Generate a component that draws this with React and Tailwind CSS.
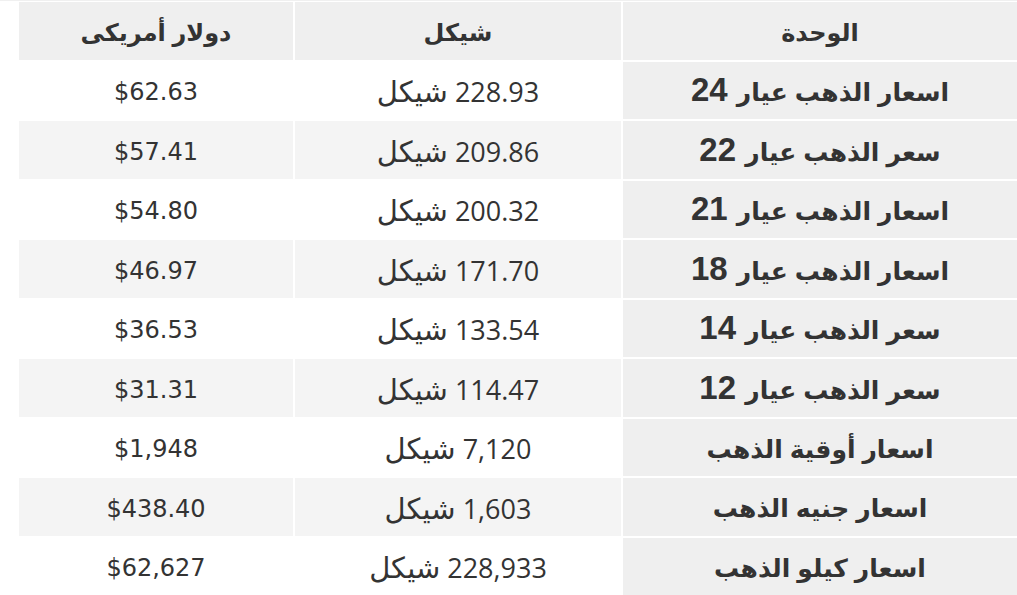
import React from "react";

const rows = [
  { unit: "اسعار الذهب عيار", k: "24", ils: "228.93", usd: "$62.63" },
  { unit: "سعر الذهب عيار", k: "22", ils: "209.86", usd: "$57.41" },
  { unit: "اسعار الذهب عيار", k: "21", ils: "200.32", usd: "$54.80" },
  { unit: "اسعار الذهب عيار", k: "18", ils: "171.70", usd: "$46.97" },
  { unit: "سعر الذهب عيار", k: "14", ils: "133.54", usd: "$36.53" },
  { unit: "سعر الذهب عيار", k: "12", ils: "114.47", usd: "$31.31" },
  { unit: "اسعار أوقية الذهب", ils: "7,120", usd: "$1,948" },
  { unit: "اسعار جنيه الذهب", ils: "1,603", usd: "$438.40" },
  { unit: "اسعار كيلو الذهب", ils: "228,933", usd: "$62,627" },
];

const App = () => {
  return (
    <div className="w-[1017px] h-[595px] overflow-hidden bg-white text-[#333]">
      <div className="h-px bg-[#f0f0f0]" />
      <div className="pl-[17px] -mt-px">
        <table
          dir="rtl"
          className="w-[1002px] border-separate border-spacing-[2px] table-fixed"
        >
          <colgroup>
            <col className="w-[394px]" />
            <col className="w-[326px]" />
            <col className="w-[274px]" />
          </colgroup>
          <thead>
            <tr className="h-[57.5px] bg-[#efefef] text-[24px] font-['Liberation_Sans','DejaVu_Sans',sans-serif]">
              <th className="font-bold pt-1">الوحدة</th>
              <th className="font-bold pt-1">شيكل</th>
              <th className="font-bold pt-1">دولار أمريكى</th>
            </tr>
          </thead>
          <tbody>
            {rows.map((r, i) => (
              <tr
                key={i}
                className={
                  "h-[57.5px] " + (i % 2 === 1 ? "bg-[#f4f4f4]" : "bg-white")
                }
              >
                <td className="bg-[#efefef] text-center font-bold text-[25px] pt-1 font-['Liberation_Sans','DejaVu_Sans',sans-serif]">
                  {r.unit}
                  {r.k && <span className="text-[33px] leading-none"> {r.k}</span>}
                </td>
                <td className="text-center text-[27px] pt-1 font-['Open_Sans','DejaVu_Sans',sans-serif]">
                  <span dir="ltr" className="font-['Open_Sans',sans-serif]">
                    {r.ils}
                  </span>{" "}
                  <span className="font-['DejaVu_Sans',sans-serif] text-[29px] leading-none">
                    شيكل
                  </span>
                </td>
                <td
                  dir="ltr"
                  className="text-center text-[24px] pt-1 font-['DejaVu_Sans',sans-serif]"
                >
                  {r.usd}
                </td>
              </tr>
            ))}
          </tbody>
        </table>
      </div>
    </div>
  );
};

export default App;
